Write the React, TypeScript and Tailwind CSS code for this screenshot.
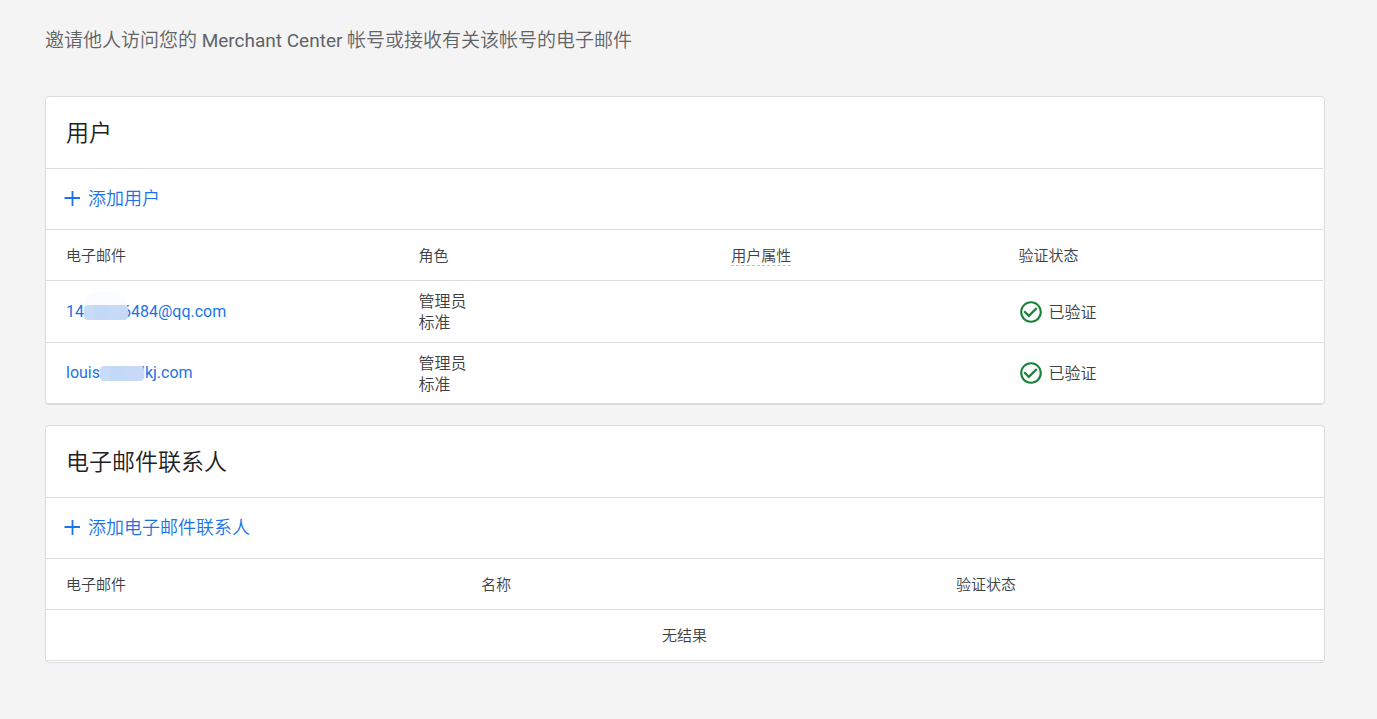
import type { ReactNode } from "react";

function CheckIcon() {
  return (
    <svg className="size-[26px] shrink-0 fill-[#188038]" viewBox="0 0 24 24" aria-hidden="true">
      <path d="M16.59 7.58 10 14.17l-3.59-3.58L5 12l5 5 8-8zM12 2C6.48 2 2 6.48 2 12s4.48 10 10 10 10-4.48 10-10S17.52 2 12 2zm0 18c-4.42 0-8-3.58-8-8s3.58-8 8-8 8 3.58 8 8-3.58 8-8 8z" />
    </svg>
  );
}

function Card({ title, action, className = "", children }: { title: string; action: string; className?: string; children: ReactNode }) {
  return (
    <section className={`rounded border border-[#dadce0] bg-white pr-px ${className}`}>
      <h2 className="flex h-[72px] items-center border-b border-[#dadce0] px-5 pt-[3px] text-[23px] text-[#202124]">{title}</h2>
      <div className="flex h-[61px] items-center border-b border-[#dadce0] px-[18px] pb-px">
        <button type="button" className="flex items-center gap-2 text-[18px] text-[#1a73e8]">
          <svg className="size-4 stroke-[#1a73e8]" strokeWidth="1.8" viewBox="0 0 16 16" aria-hidden="true">
            <path d="M8.5 -.5v15.5M.5 7h15.5" />
          </svg>
          {action}
        </button>
      </div>
      {children}
    </section>
  );
}

function Verified() {
  return (
    <span className="-ml-px flex items-center gap-[5px]">
      <CheckIcon />
      <span className="pt-0.5">已验证</span>
    </span>
  );
}

const th = "h-[51px] border-b border-[#dadce0] px-5 pt-0.5 text-left text-[15px] font-[350]";
const td = "border-b border-[#dadce0] px-5";

const users = [
  { start: "14", end: "6484@qq.com", gap: "w-[38px]", halo: true },
  { start: "louis", end: "lkj.com", gap: "w-[41px]", halo: false },
];

export default function App() {
  return (
    <main className="min-h-screen bg-[#f4f4f4] pt-[27px] pr-[52px] pb-14 pl-[45px] font-['Roboto','Noto_Sans_CJK_SC',sans-serif] font-[350] text-[#3c4043]">
      <p className="text-[19px] leading-7 text-[#5f6368]">
        邀请他人访问您的 <span className="font-normal">Merchant Center</span> 帐号或接收有关该帐号的电子邮件
      </p>
      <div className="mt-[41px] flex flex-col gap-5">
        <Card title="用户" action="添加用户">
          <table className="w-full table-fixed border-separate border-spacing-0">
            <thead>
              <tr>
                <th className={`${th} w-[27.6%]`}>电子邮件</th>
                <th className={`${th} w-[24.5%]`}>角色</th>
                <th className={`${th} w-[22.5%]`}>
                  <span className="border-b border-dashed border-[#bdc1c6]">用户属性</span>
                </th>
                <th className={th}>验证状态</th>
              </tr>
            </thead>
            <tbody>
              {users.map((u) => (
                <tr key={u.start} className="h-[62px] last:h-[61px]">
                  <td className={td}>
                    <a href="#" className="flex items-center text-base font-normal text-[#1a73e8]">
                      {u.start}
                      <span className={`relative h-4 ${u.gap}`}>
                        {u.halo && <span className="absolute -top-3 left-0 h-7 w-[43px] rounded-full bg-[#fafcff]" />}
                        <span className="absolute top-px left-0 flex h-[15px] w-11 overflow-hidden rounded-sm">
                          <span className="w-[10px] bg-[#c8dcf8]" />
                          <span className="w-[15px] bg-[#c2d9f8]" />
                          <span className="flex-1 bg-[#c6daf8]" />
                        </span>
                      </span>
                      {u.end}
                    </a>
                  </td>
                  <td className={`${td} pt-px text-base leading-[21px]`}>
                    管理员
                    <br />
                    标准
                  </td>
                  <td className={td} />
                  <td className={td}>
                    <Verified />
                  </td>
                </tr>
              ))}
            </tbody>
          </table>
        </Card>
        <Card title="电子邮件联系人" action="添加电子邮件联系人" className="pb-px">
          <table className="w-full table-fixed border-separate border-spacing-0">
            <thead>
              <tr>
                <th className={`${th} w-[32.5%]`}>电子邮件</th>
                <th className={`${th} w-[37.2%]`}>名称</th>
                <th className={th}>验证状态</th>
              </tr>
            </thead>
            <tbody>
              <tr className="h-[51px]">
                <td colSpan={3} className={`${td} pt-0.5 text-center text-[15px]`}>
                  无结果
                </td>
              </tr>
            </tbody>
          </table>
        </Card>
      </div>
    </main>
  );
}
